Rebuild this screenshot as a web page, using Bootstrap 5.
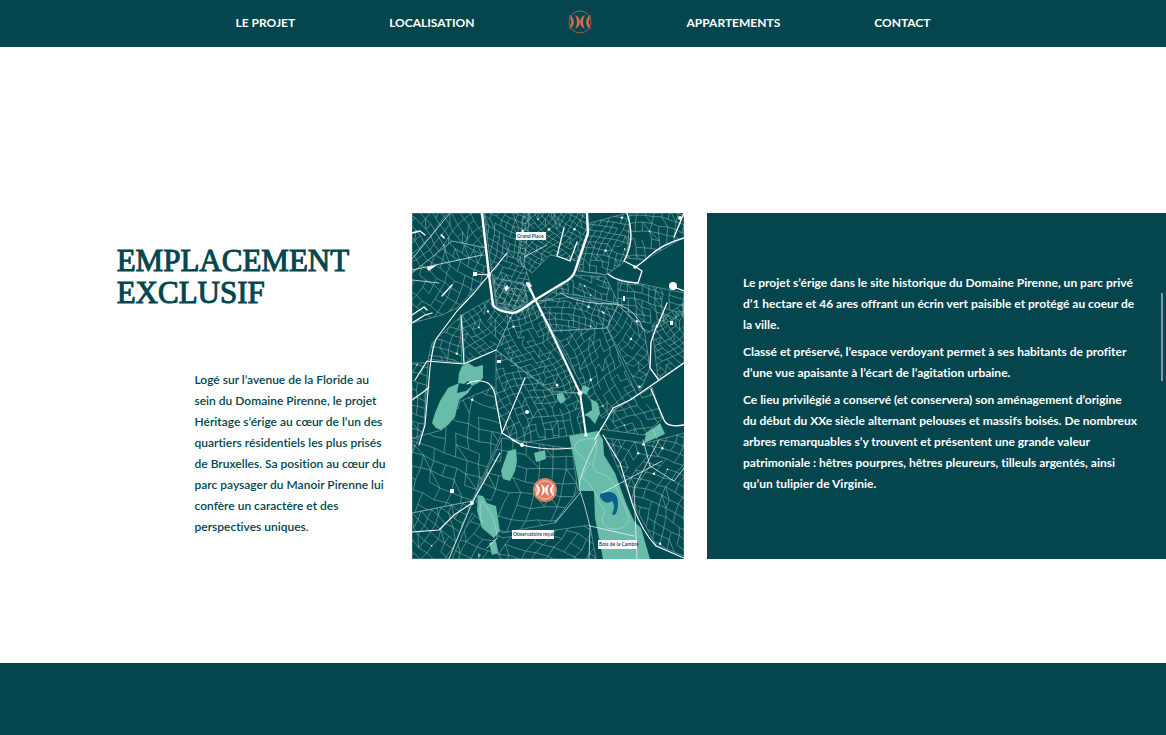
<!DOCTYPE html>
<html lang="fr">
<head>
<meta charset="utf-8">
<meta name="viewport" content="width=device-width, initial-scale=1">
<title>Héritage – Localisation</title>
<link href="https://cdn.jsdelivr.net/npm/bootstrap@5.3.0/dist/css/bootstrap.min.css" rel="stylesheet">
<style>
:root { --petrol: #04454e; --map-ground: #024b50; --coral: #d96c52; }
body { font-family: "Lato", sans-serif; font-size: 12px; line-height: 21px; font-variant-ligatures: none; color: var(--petrol); background: #fff; }
.bg-petrol { background: var(--petrol); }
.top-bar { min-height: 47px; padding-bottom: 3px; gap: 94px; }
.top-bar a { color: #fff; font-weight: 700; }
.top-bar .home-link { color: var(--coral); }
.place { padding: 166px 0 104px; }
.place-grid { display: grid; grid-template-columns: 389fr 272fr 459fr; column-gap: 23px; }
.place-title { font-family: "Liberation Serif", serif; font-size: 31px; line-height: 32px; -webkit-text-stroke: 1px var(--petrol); margin: 32px 0 60px; padding-left: 30%; }
.place-intro { padding-left: 50%; font-weight: 600; }
.place-panel { color: #fff; font-weight: 700; padding: 0 16px 0 36px; }
.place-panel p { margin-bottom: 6px; }
.city-map { background: var(--map-ground); }
.city-map text { font: 600 5px "Lato", sans-serif; fill: var(--petrol); }
.scroll-thumb { position: fixed; top: 293px; right: 3px; width: 2px; height: 88px; background: #8d9294; }
.foot-band { min-height: 72px; }
@media (max-width: 767px) {
  .top-bar { gap: 16px; }
  .place { padding: 32px 0; }
  .place-grid { display: block; }
  .place-title, .place-intro { padding-left: 24px; }
  .place-panel { padding: 32px 24px; }
}
</style>
</head>
<body>
<svg class="d-none" aria-hidden="true">
  <symbol id="emblem" viewBox="-12 -12 24 24">
    <circle r="11" fill="none" stroke="currentColor" stroke-width=".7"/>
    <path d="M-10.500-6.500C-5-4.500-5 4.500-10.500 6.500C-8 2.500-8-2.500-10.500-6.500ZM10.500-6.500C5-4.500 5 4.500 10.500 6.500C8 2.500 8-2.500 10.500-6.500Z" fill="currentColor" stroke="currentColor" stroke-width=".5"/>
    <path d="M-4.500-6.500C1-4.500 1 4.500-4.500 6.500C-2.200 2.500-2.200-2.500-4.500-6.500ZM4.500-6.500C-1-4.500-1 4.500 4.500 6.500C2.200 2.500 2.200-2.500 4.500-6.500Z" fill="currentColor" stroke="currentColor" stroke-width=".4"/>
  </symbol>
</svg>

<header class="bg-petrol">
  <nav class="top-bar d-flex justify-content-center align-items-center" aria-label="Navigation principale">
    <a class="text-decoration-none" href="#projet">LE PROJET</a>
    <a class="text-decoration-none" href="#localisation">LOCALISATION</a>
    <a class="home-link d-flex" href="#accueil" aria-label="Accueil"><svg width="24" height="24"><use href="#emblem"/></svg></a>
    <a class="text-decoration-none" href="#appartements">APPARTEMENTS</a>
    <a class="text-decoration-none" href="#contact">CONTACT</a>
  </nav>
</header>

<main>
  <section class="place" id="localisation">
    <div class="place-grid">
      <div>
        <h1 class="place-title">EMPLACEMENT<br>EXCLUSIF</h1>
        <p class="place-intro mb-0">Logé sur l’avenue de la Floride au<br>sein du Domaine Pirenne, le projet<br>Héritage s’érige au cœur de l’un des<br>quartiers résidentiels les plus prisés<br>de Bruxelles. Sa position au cœur du<br>parc paysager du Manoir Pirenne lui<br>confère un caractère et des<br>perspectives uniques.</p>
      </div>

      <svg class="city-map d-block w-100" viewBox="0 0 272 346" role="img" aria-label="Plan du quartier">
        <g id="streets" fill="none" stroke="#a3c1c0" stroke-width=".5"></g>

        <g fill="#67bcaa">
          <path d="M50 153L56 150L63 154L71 152V165L66 170L60 173L56 168L52 171L46 170L47 160Z"/>
          <path d="M36 175L47 170L45 180L54 178L61 172L56 180L47 187L43 204L36 212L29 217L24 215L20 210L23 200L28 188Z"/>
          <path d="M145 181L151 180L154 187L149 191L145 186ZM171 172L178 175L174 182L169 179ZM179 186L186 190L188 200L183 211L177 204L172 202L180 197Z"/>
          <path d="M157 223L186 218L191 227L192 242L203 260L214 290L222 308L229 315L238 346H191L183 305L182 278H168L162 245Z"/>
          <path d="M232 230L234 221L248 210L253 221L235 229Z"/>
          <path d="M96 238L104 236L105 248L103 258L98 268L91 266L89 258ZM66 282L71 283L75 290L84 293L88 318L82 325L70 315L65 298ZM77 330L84 328L86 340L80 342ZM66 340L69 342L66 346ZM122 240L133 237L134 246L124 249Z"/>
        </g>
        <path d="M163 236Q163 226 171 227L181 225Q187 232 183 245Q178 254 185 259L193 262Q201 267 208 282L217 305Q215 317 201 316Q190 316 190 304Q196 298 188 291Q180 270 170 265Q172 256 178 251L162 236M70 310Q66 296 70 288Q84 304 85 324M232 222L241 216L245 226" fill="none" stroke="#a9d8ca" stroke-width=".7"/>
        <path d="M188 284C187 279 193 280 196 279C204 278 208 285 205 298Q203 304 200 301Q204 292 200 288C196 291 191 290 188 284" fill="#0b608d"/>

        <g fill="none" stroke="#fff" stroke-linecap="round" stroke-linejoin="round">
          <path stroke-width="2.400" d="M70 0L77 62L81 92Q84 98 101 100Q108 99 123 87L151 70Q161 65 163 58L176 20L175 0"/>
          <path stroke-width="2" d="M115 70L137 114L168 180L174 222"/>
          <path stroke-width="1.100" d="M77 62L62 80L45 98L24 126Q20 137 18 155L13 212L7 232M49 102L52 150M0 187L14 177L17 174M3 167L15 148L52 151L84 137M55 171Q65 165 76 170Q83 175 84 188L90 220L110 232M90 220L113 165M77 62L62 61M77 62L95 40M88 240L60 290L42 302L27 317L0 319M100 227L110 232Q135 238 160 235M191 222L208 250L220 290Q229 317 244 333L272 345"/>
          <path stroke-width="1.300" d="M272 150L240 172L218 187L201 195L192 211L183 226M0 110L13 102L20 100M0 102L12 94L15 97M0 20L8 18L13 22M239 176L252 207Q255 215 272 212M245 112L239 129L238 155L246 166M152 15L145 43L158 48L165 29M215 0Q224 27 212 48L224 54L233 47Q249 31 272 25M224 54L230 58L226 70Q205 69 196 61M259 73L272 78M255 90L245 114M272 0L262 24M30 83L40 72"/>
          <path stroke-width=".7" d="M60 290L37 346M85 325L75 335M148 80Q167 92 206 91Q225 98 231 116M27 70L0 67M0 46L38 0M0 57L70 42M112 44L135 32M185 227Q163 270 168 278Q173 292 178 314L177 346M168 280L143 310M178 313L222 323M231 227L238 253L262 268L272 255M190 280L250 248M247 227L222 275L225 346"/>
        </g>

        <g id="squares" fill="#fff">
          <circle cx="261" cy="73" r="4"/><circle cx="168" cy="180" r="2.500"/><circle cx="60" cy="290" r="2"/><circle cx="110" cy="232" r="2"/><circle cx="77" cy="62" r="2"/><circle cx="174" cy="222" r="1.800"/><circle cx="268" cy="5" r="2"/><circle cx="115" cy="199" r="2"/><circle cx="145" cy="172" r="1.500"/><circle cx="223" cy="54" r="1.800"/>
          <path d="M85 147h4v3h-4zM38 276h4v4h-4zM61 59h4v4h-4zM114 71l3-2 3 4-3 2zM28 22l2-1 3 4-1 1zM92 75l3-3 2 3-3 4zM15 54l10-2-4 3-5 3zM211 83h2v5h-2zM258 108h3v4h-3zM189 97l4 3-2 1z"/>
        </g>

        <g transform="translate(133 277)">
          <circle r="12" fill="#db7b62"/>
          <svg x="-10" y="-10" width="20" height="20" color="#fff"><use href="#emblem"/></svg>
        </g>
        <g>
          <path fill="#fff" d="M104 19h30v8h-30zM100 317h42v9h-42zM186 327h39v9h-39z"/>
          <text x="105" y="25">Grand Place</text>
          <text x="101" y="323">Observatoire royal</text>
          <text x="187" y="333">Bois de la Cambre</text>
        </g>
      </svg>

      <div class="place-panel bg-petrol d-flex flex-column justify-content-center">
        <div>
          <p>Le projet s’érige dans le site historique du Domaine Pirenne, un parc privé<br>d’1 hectare et 46 ares offrant un écrin vert paisible et protégé au coeur de<br>la ville.</p>
          <p>Classé et préservé, l’espace verdoyant permet à ses habitants de profiter<br>d’une vue apaisante à l’écart de l’agitation urbaine.</p>
          <p>Ce lieu privilégié a conservé (et conservera) son aménagement d’origine<br>du début du XXe siècle alternant pelouses et massifs boisés. De nombreux<br>arbres remarquables s’y trouvent et présentent une grande valeur<br>patrimoniale : hêtres pourpres, hêtres pleureurs, tilleuls argentés, ainsi<br>qu’un tulipier de Virginie.</p>
        </div>
      </div>
    </div>
  </section>
</main>
<footer class="foot-band bg-petrol"></footer>
<div class="scroll-thumb" aria-hidden="true"></div>

<script src="https://cdn.jsdelivr.net/npm/bootstrap@5.3.0/dist/js/bootstrap.bundle.min.js"></script>
<script>
// Minor streets: every district is a polygon filled with a slightly irregular street grid.
// [polygon, angle of the grid in degrees, distance between streets]
const districts = [
  ['0,0 70,0 74,35 40,28 0,60', 48, 8],
  ['0,60 40,28 74,35 77,62 45,95 30,102 0,110', 28, 9],
  ['72,0 118,0 112,50 123,87 100,98 84,92', 20, 6],
  ['112,0 175,0 175,20 165,48 138,42 120,60 105,48', 42, 5],
  ['178,10 215,0 220,25 211,50 194,62 166,58', 18, 6],
  ['218,0 272,0 272,24 233,47 215,45', 5, 8],
  ['163,62 194,64 206,90 150,80 125,92', 15, 6],
  ['82,65 112,70 116,88 100,98 85,94', 35, 6],
  ['80,85 84,95 101,100 84,137 52,150 50,102', 50, 6],
  ['101,100 123,88 168,180 140,180 84,137', 62, 6],
  ['84,137 140,178 168,180 174,220 110,230 90,220 84,185', 72, 7],
  ['125,88 160,84 206,92 195,115 140,118', 12, 6],
  ['206,66 272,80 272,100 235,120 206,92', 8, 7],
  ['140,118 195,115 225,182 190,205 175,182', 63, 7],
  ['195,115 206,92 232,116 238,155 228,178', 40, 7],
  ['240,112 272,90 272,150 246,167', 52, 6],
  ['203,196 240,174 250,206 232,222 188,216', 66, 8],
  ['20,130 48,104 50,150 16,146', 15, 8],
  ['0,150 16,150 12,214 0,240', 10, 8],
  ['44,190 82,174 90,220 60,288 0,300 0,225 30,217', 12, 12],
  ['0,300 60,288 37,346 0,346', 35, 9],
  ['62,286 90,225 160,236 166,278 142,310 90,320', 10, 13],
  ['40,346 60,300 90,325 178,312 184,346', 25, 11],
  ['193,225 235,230 272,220 272,343 244,332 221,290', 23, 9]
];

let seed = 17;
const rnd = () => (seed = seed * 16807 % 2147483647) / 2147483647;
let out = '', dots = '';
districts.forEach(([poly, angle, step], i) => {
  const pts = poly.split(' ').map(p => p.split(',').map(Number));
  const cx = pts.reduce((s, p) => s + p[0], 0) / pts.length;
  const cy = pts.reduce((s, p) => s + p[1], 0) / pts.length;
  const a = angle * Math.PI / 180;
  const nodes = [];
  for (let u = -9; u <= 9; u++) {
    nodes.push([]);
    for (let v = -9; v <= 9; v++) {
      // a gentle bend keeps long streets from running dead straight
      const x = (u + Math.sin(v * .5 + i) * .5 + (rnd() - .5) * .25) * step;
      const y = (v + Math.sin(u * .4 + i) * .5 + (rnd() - .5) * .25) * step;
      nodes[u + 9].push([(cx + x * Math.cos(a) - y * Math.sin(a)).toFixed(1), (cy + x * Math.sin(a) + y * Math.cos(a)).toFixed(1)]);
    }
  }
  let d = '';
  for (let u = 0; u < 18; u++) for (let v = 0; v < 18; v++) {
    const p = nodes[u][v];
    if (rnd() > .1) d += `M${p}L${nodes[u + 1][v]}`;
    if (rnd() > .25) d += `M${p}L${nodes[u][v + 1]}`;
    if (rnd() > .85) d += `M${p}L${nodes[u + 1][v + 1]}`;
    if (rnd() > .97) dots += `<circle cx="${p[0]}" cy="${p[1]}" r="${rnd() > .6 ? 1.2 : .8}" clip-path="url(#d${i})"/>`;
  }
  out += `<clipPath id="d${i}"><polygon points="${poly}"/></clipPath><path clip-path="url(#d${i})" d="${d}"/><polygon points="${poly}"/>`;
});
document.getElementById('streets').innerHTML = out;
document.getElementById('squares').insertAdjacentHTML('beforeend', dots);
</script>
</body>
</html>
